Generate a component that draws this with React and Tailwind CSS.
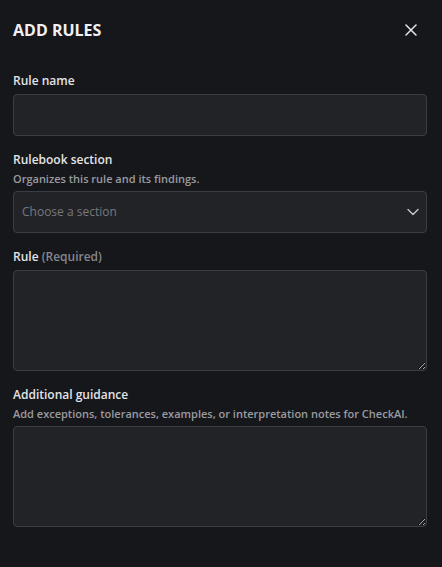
import { X, ChevronDown } from 'lucide-react';

const font = { fontFamily: '"Open Sans", "Noto Sans", sans-serif' };

function Label({ children, hint }) {
  return (
    <div className="mb-[5px]">
      <div className="text-[12px] leading-[16px] font-semibold text-[#e4e4e6]">{children}</div>
      {hint && <div className="mt-[3px] text-[11px] leading-[15px] font-semibold text-[#9a9ba0]">{hint}</div>}
    </div>
  );
}

const box = 'block w-full rounded-[4px] border border-[#3c3d42] bg-[#222327] text-[12px] text-[#e4e4e6] placeholder-[#77787d] focus:outline-none';

export default function App() {
  return (
    <div className="min-h-screen w-full bg-[#16171b] pl-[13px] pr-[15px]" style={font}>
      <div className="flex items-center justify-between h-[60px]">
        <h2 className="text-[16px] font-bold text-[#f1f1f3]">ADD RULES</h2>
        <button className="mr-[6px] text-[#e8e8ea]">
          <X size={20} strokeWidth={1.8} />
        </button>
      </div>

      <div className="pt-[13px]">
        <Label>Rule name</Label>
        <input type="text" className={`${box} h-[42px] px-3`} />
      </div>

      <div className="pt-[16px]">
        <Label hint="Organizes this rule and its findings.">Rulebook section</Label>
        <div className={`${box} h-[42px] flex items-center justify-between pl-[8px] pr-[3px]`}>
          <span className="text-[#77787d]">Choose a section</span>
          <ChevronDown size={20} strokeWidth={1.6} className="text-[#c9c9cc]" />
        </div>
      </div>

      <div className="pt-[16px]">
        <Label>
          Rule <span className="text-[#85868b]">(Required)</span>
        </Label>
        <textarea className={`${box} h-[101px] p-3 resize-y`} />
      </div>

      <div className="pt-[16px]">
        <Label hint="Add exceptions, tolerances, examples, or interpretation notes for CheckAI.">
          Additional guidance
        </Label>
        <textarea className={`${box} h-[101px] p-3 resize-y`} />
      </div>
    </div>
  );
}
